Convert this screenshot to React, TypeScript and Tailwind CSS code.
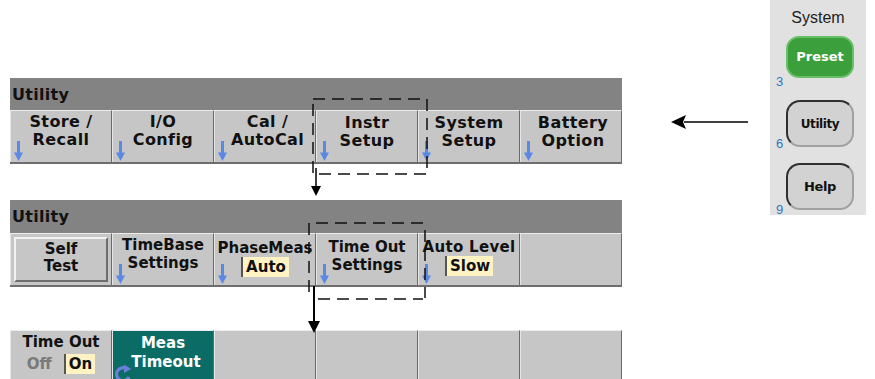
import React from "react";

const BLUE = "#5b87e5";

function DownArrow() {
  return (
    <svg width="9" height="20" viewBox="0 0 9 20" className="absolute left-[3px] bottom-[1px]">
      <rect x="3" y="0" width="3" height="13" fill={BLUE} />
      <polygon points="0,11.5 9,11.5 4.5,20" fill={BLUE} />
    </svg>
  );
}

function Hi({ children }: { children: React.ReactNode }) {
  return (
    <span className="inline-block bg-[#fff3c4] border-l-2 border-l-[#555] px-[3px] leading-[20px]">
      {children}
    </span>
  );
}

function Key({
  children,
  arrow,
  className = "",
}: {
  children?: React.ReactNode;
  arrow?: boolean;
  className?: string;
}) {
  return (
    <div
      className={
        "relative flex flex-col items-center border-t border-t-[#ededed] border-l border-l-[#e6e6e6] border-r border-r-[#6a6a6a] " +
        className
      }
    >
      {children}
      {arrow && <DownArrow />}
    </div>
  );
}

function Title() {
  return (
    <div className="h-[33px] bg-[#838383] pl-[2px] flex items-center text-[16px] font-bold tracking-[0.3px] text-[#111] pt-[1px]">
      Utility
    </div>
  );
}

export default function App() {
  return (
    <div className="relative w-[875px] h-[379px] bg-white overflow-hidden flex font-['DejaVu_Sans',sans-serif] text-[#111]">
      {/* left column */}
      <div className="ml-[10px] w-[612px] flex flex-col pt-[78px]">
        {/* panel 1 */}
        <Title />
        <div className="grid grid-cols-6 h-[54px] bg-[#c6c6c6] border-b-2 border-b-[#6e6e6e] text-[16px] font-bold leading-[18px] tracking-[0.4px]">
          <Key arrow className="pt-[2px]">
            <span>Store /</span>
            <span>Recall</span>
          </Key>
          <Key arrow className="pt-[2px]">
            <span>I/O</span>
            <span>Config</span>
          </Key>
          <Key arrow className="pt-[2px] pl-[5px]">
            <span>Cal /</span>
            <span>AutoCal</span>
          </Key>
          <Key arrow className="pt-[3px]">
            <span>Instr</span>
            <span>Setup</span>
          </Key>
          <Key arrow className="pt-[3px]">
            <span>System</span>
            <span>Setup</span>
          </Key>
          <Key arrow className="pt-[3px] pl-[4px]">
            <span>Battery</span>
            <span>Option</span>
          </Key>
        </div>

        {/* panel 2 */}
        <div className="mt-[36px]">
          <Title />
        </div>
        <div className="grid grid-cols-6 h-[55px] bg-[#c6c6c6] border-b-2 border-b-[#6e6e6e] text-[15px] font-bold">
          <Key className="p-[3px] pb-[3px]">
            <div className="w-full h-full flex flex-col items-center border-2 border-t-[#f2f2f2] border-l-[#f2f2f2] border-b-[#6d6d6d] border-r-[#6d6d6d] leading-[17px] pt-[2px]">
              <span>Self</span>
              <span>Test</span>
            </div>
          </Key>
          <Key arrow className="pt-[2px] leading-[18px]">
            <span>TimeBase</span>
            <span>Settings</span>
          </Key>
          <Key arrow className="pt-[6px] leading-[17px]">
            <span>PhaseMeas</span>
            <Hi>Auto</Hi>
          </Key>
          <Key arrow className="pt-[4px] leading-[18px]">
            <span>Time Out</span>
            <span>Settings</span>
          </Key>
          <Key arrow className="pt-[4px] leading-[18px]">
            <span className="tracking-[0.3px]">Auto Level</span>
            <Hi>Slow</Hi>
          </Key>
          <Key />
        </div>

        {/* panel 3 */}
        <div className="mt-[43px] grid grid-cols-6 h-[50px] bg-[#c6c6c6] text-[15px] font-bold">
          <Key className="pt-[1px] leading-[20px]">
            <span>Time Out</span>
            <span className="flex items-center gap-[12px] mt-[2px]">
              <span className="text-[#7a7a7a]">Off</span>
              <Hi>On</Hi>
            </span>
          </Key>
          <Key className="bg-[#0b6c66] text-white pt-[3px] leading-[19px]">
            <span>Meas</span>
            <span className="pl-[6px]">Timeout</span>
            <svg width="20" height="20" viewBox="0 0 20 20" className="absolute left-[1px] bottom-[-4px]">
              <path d="M13 6 A6.5 6.5 0 1 0 15 14" fill="none" stroke="#6a80d8" strokeWidth="3.2" />
              <polygon points="10,1.5 17,6 10,10" fill="#6a80d8" />
            </svg>
          </Key>
          <Key />
          <Key />
          <Key />
          <Key />
        </div>
      </div>

      <div className="flex-1" />

      {/* right front panel */}
      <div className="mr-[9px] w-[96px] h-[215px] bg-[#e1e1e1] flex flex-col font-['Liberation_Sans',Arial,sans-serif]">
        <div className="text-center text-[16px] leading-[18px] text-[#222] mt-[9px]">System</div>
        <div className="flex items-end mt-[9px] pl-[6px] gap-[3px]">
          <span className="w-[7px] text-[13px] leading-none text-[#2f78c0] translate-y-[10px]">3</span>
          <div className="w-[68px] h-[42px] rounded-[13px] bg-[#3ba03b] border-2 border-[#67bf67] flex items-center justify-center text-white text-[13px] font-bold font-['DejaVu_Sans',sans-serif]">
            Preset
          </div>
        </div>
        <div className="flex items-end mt-[22px] pl-[6px] gap-[3px]">
          <span className="w-[7px] text-[13px] leading-none text-[#2f78c0] translate-y-[3px]">6</span>
          <div className="w-[68px] h-[47px] rounded-[14px] bg-[#d2d2d2] border-2 border-t-[#2f2f2f] border-l-[#2f2f2f] border-r-[#a0a0a0] border-b-[#a0a0a0] flex items-center justify-center text-[#111] text-[12px] font-bold tracking-[-0.4px] font-['DejaVu_Sans',sans-serif]">
            Utility
          </div>
        </div>
        <div className="flex items-end mt-[16px] pl-[6px] gap-[3px]">
          <span className="w-[7px] text-[13px] leading-none text-[#2f78c0] translate-y-[6px]">9</span>
          <div className="w-[68px] h-[47px] rounded-[14px] bg-[#d2d2d2] border-2 border-t-[#2f2f2f] border-l-[#2f2f2f] border-r-[#a0a0a0] border-b-[#a0a0a0] flex items-center justify-center text-[#111] text-[13px] font-bold tracking-[-0.4px] font-['DejaVu_Sans',sans-serif]">
            Help
          </div>
        </div>
      </div>

      {/* annotation overlay */}
      <svg
        className="absolute inset-0 pointer-events-none"
        width="875"
        height="379"
        viewBox="0 0 875 379"
      >
        <g stroke="#111" strokeWidth="1.5" fill="none" strokeDasharray="12 7">
          <path d="M313 99 H427 V174 H313 Z" />
          <path d="M309 292 V223 H423" />
          <path d="M425 230 V298" />
          <path d="M318 299 H423" />
        </g>
        <g stroke="#000" fill="none">
          <path d="M316 168 V188" strokeWidth="1.5" />
          <path d="M314 286 V323" strokeWidth="2" />
          <path d="M684 122 H748" strokeWidth="1.5" />
        </g>
        <g fill="#000">
          <polygon points="311,186 321,186 316,196" />
          <polygon points="308,321 320,321 314,333" />
          <polygon points="671,122 686,115 683,122 686,129" />
        </g>
      </svg>
    </div>
  );
}
